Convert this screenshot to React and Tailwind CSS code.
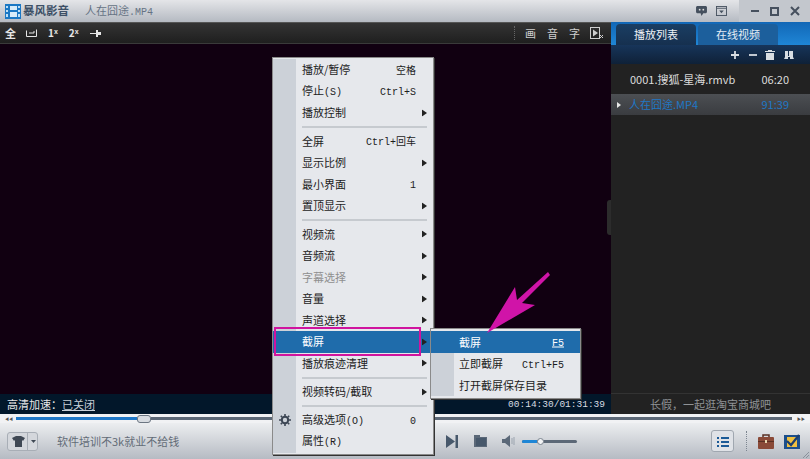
import React from "react";

const cjk = "font-['Noto_Sans_CJK_SC','Liberation_Sans',sans-serif]";
const mono = "font-['Liberation_Mono','Noto_Sans_CJK_SC',monospace]";

const Arrow = () => (
  <svg width="5" height="7" viewBox="0 0 5 7" className="absolute right-[6px] top-1/2 -translate-y-1/2">
    <path d="M0 0L5 3.5L0 7Z" fill="#222" />
  </svg>
);

const Item = ({ label, sub, shortcut, arrow, disabled, active, icon }) => (
  <div className={`relative flex h-[21.5px] items-center ${active ? "bg-[#1f6cab] text-white" : disabled ? "text-[#8f8f8f]" : "text-[#1c1c1c]"}`}>
    <div className={`flex h-full w-[23px] shrink-0 items-center justify-center ${active ? "" : "bg-[#ccd1d8]"}`}>{icon}</div>
    <span className="ml-[6px] whitespace-nowrap text-[11px] leading-none">{label}{sub && <span className={`${mono} text-[10px]`}>{sub}</span>}</span>
    {shortcut && <span className={`${mono} absolute right-[17px] translate-y-[1.5px] text-[10px] leading-none`}>{shortcut}</span>}
    {arrow && <Arrow />}
  </div>
);

const Sep = () => (
  <div className="relative flex h-[7px] items-center">
    <div className="h-full w-[23px] bg-[#ccd1d8]" />
    <div className="ml-[6px] mr-[6px] h-[2px] flex-1 bg-[#c6cacf]" />
  </div>
);

const Gear = () => (
  <svg width="12" height="12" viewBox="0 0 12 12">
    <circle cx="6" cy="6" r="3.2" fill="none" stroke="#3c4654" strokeWidth="2" />
    <path d="M6 0V2M6 10V12M0 6H2M10 6H12M1.8 1.8L3.2 3.2M8.8 8.8L10.2 10.2M1.8 10.2L3.2 8.8M8.8 3.2L10.2 1.8" stroke="#3c4654" strokeWidth="1.6" />
  </svg>
);

const ToolGlyph = ({ children, className = "" }) => (
  <span className={`text-[11px] leading-none ${className}`}>{children}</span>
);

export default function App() {
  return (
    <div className={`${cjk} relative flex h-[459px] w-[810px] flex-col overflow-hidden bg-[#c8ccd2]`}>
      {/* title bar */}
      <div className="flex h-[22px] shrink-0 items-center bg-gradient-to-b from-[#e4e5e8] to-[#b5bac2]">
        <svg width="16" height="16" viewBox="0 0 16 16" className="ml-[5px]">
          <rect x="0" y="1" width="16" height="15" fill="#1b78c4" />
          <path d="M1 3H3V5H1ZM1 7H3V9H1ZM1 11H3V14H1ZM13 3H15V5H13ZM13 7H15V9H13ZM13 11H15V14H13Z" fill="#bfe0f7" />
          <rect x="5" y="3" width="7" height="4" fill="#d8ecf9" />
          <rect x="5" y="9" width="7" height="5" fill="#d8ecf9" />
        </svg>
        <span className="ml-[2px] text-[11.5px] font-bold leading-none text-[#3d5066]">暴风影音</span>
        <span className="ml-[16px] text-[11px] leading-none text-[#667384]">人在囧途<span className={`${mono} text-[10px]`}>.MP4</span></span>
        <div className="ml-auto flex h-full items-center">
          <svg width="11" height="10" viewBox="0 0 12 11" className="mr-[9px]">
            <path d="M1 0H11L12 1V7L11 8H8L6 11L5 8H1L0 7V1Z" fill="#45505e" />
            <circle cx="4" cy="4" r="1" fill="#ddd" />
            <circle cx="8" cy="4" r="1" fill="#ddd" />
          </svg>
          <svg width="11" height="10" viewBox="0 0 12 11" className="mr-[12px]">
            <rect x="0.5" y="0.5" width="11" height="10" fill="none" stroke="#45505e" />
            <path d="M1 2.5H11" stroke="#45505e" />
            <path d="M3.5 5H8.5L6 8Z" fill="#45505e" />
          </svg>
          <div className="flex h-full w-[71px] items-center bg-[#c3c7cd] pl-[12px]">
            <div className="h-[2px] w-[8px] bg-[#46505e]" />
            <div className="ml-[11px] h-[9px] w-[9px] border-2 border-[#46505e]" />
            <svg width="10" height="10" viewBox="0 0 10 10" className="ml-[11px]"><path d="M1 1L9 9M9 1L1 9" stroke="#46505e" strokeWidth="2" /></svg>
          </div>
        </div>
      </div>

      {/* middle */}
      <div className="flex min-h-0 flex-1">
        {/* left column */}
        <div className="relative flex w-[611px] shrink-0 flex-col border-t border-[#555]">
          <div className="flex h-[21px] shrink-0 items-center border-b border-[#3a3a3a] bg-gradient-to-b from-[#343434] to-[#1f1f1f] pl-[5px] pr-[8px] text-[#e6e6e6]">
            <ToolGlyph className="font-bold">全</ToolGlyph>
            <svg width="11" height="8" viewBox="0 0 11 8" className="ml-[10px]"><path d="M0.5 1.5V7.5H10.5V0.5M3 4H8M8 2V4" fill="none" stroke="#e6e6e6" /></svg>
            <span className="ml-[11px] text-[10px] font-bold leading-none">1<sup className="text-[7px]">x</sup></span>
            <span className="ml-[11px] text-[10px] font-bold leading-none">2<sup className="text-[7px]">x</sup></span>
            <svg width="12" height="9" viewBox="0 0 12 9" className="ml-[11px]"><path d="M0 4H6V1H8V3H11V6H8V8H6V5H0Z" fill="#e6e6e6" /></svg>
            <div className="ml-auto mr-[10px] h-[14px] border-l border-dotted border-[#666]" />
            <ToolGlyph className="text-[#cfcfcf]">画</ToolGlyph>
            <ToolGlyph className="ml-[11px] text-[#cfcfcf]">音</ToolGlyph>
            <ToolGlyph className="ml-[11px] text-[#cfcfcf]">字</ToolGlyph>
            <svg width="13" height="12" viewBox="0 0 13 12" className="ml-[10px]"><rect x="0.5" y="0.5" width="9" height="11" fill="none" stroke="#cfcfcf" /><path d="M3 2.5L8 6L3 9.5Z" fill="#cfcfcf" /><path d="M10 8L13 11M13 8L10 11" stroke="#cfcfcf" /></svg>
          </div>
          <div className="flex-1 bg-[#110011]" />
          <div className="flex h-[20px] shrink-0 items-center justify-between bg-[#02172a] pl-[7px] pr-[6px]">
            <span className="text-[11px] leading-none text-[#e8e8e8]">高清加速：<span className="text-[#c8d0d8] underline">已关闭</span></span>
            <span className={`${mono} translate-y-[1px] text-[9.5px] leading-none text-[#d8dde2]`}>00:14:30/01:31:39</span>
          </div>
          <button className="absolute right-0 top-[177px] h-[35px] w-[4px] rounded-l-[3px] bg-[#2c2c2c]" aria-label="收起" />
        </div>

        {/* right panel */}
        <div className="flex min-w-0 flex-1 flex-col">
          <div className="flex h-[23px] shrink-0 items-end bg-gradient-to-b from-[#1267b6] to-[#1f86d6] pl-[5px]">
            <div className="flex h-[21px] w-[80px] items-center justify-center rounded-t-[4px] bg-gradient-to-b from-[#1a3e63] to-[#16304f] text-[11px] leading-none text-[#eef2f6]">播放列表</div>
            <div className="ml-[2px] flex h-[21px] w-[80px] items-center justify-center rounded-t-[4px] bg-[#1c5f9c] text-[11px] leading-none text-[#e4edf5]">在线视频</div>
          </div>
          <div className="flex h-[19px] shrink-0 items-center justify-end bg-gradient-to-b from-[#17355a] to-[#0f2138] pr-[16px] text-[#d8dde2]">
            <svg width="8" height="8" viewBox="0 0 9 9"><path d="M0 3.5H9V5.5H0ZM3.5 0H5.5V9H3.5Z" fill="currentColor" /></svg>
            <svg width="8" height="8" viewBox="0 0 9 9" className="ml-[10px]"><path d="M0 3.5H9V5.5H0Z" fill="currentColor" /></svg>
            <svg width="10" height="10" viewBox="0 0 10 10" className="ml-[8px]"><path d="M3 0H7V1H10V2H0V1H3ZM1 3H9V10H1Z" fill="currentColor" /></svg>
            <svg width="10" height="10" viewBox="0 0 10 10" className="ml-[9px]"><path d="M1 1H4V6H5V1H9V7L10 9H6V7H4V9H0L1 7Z" fill="currentColor" /></svg>
          </div>
          <div className="flex flex-1 flex-col bg-[#222222]">
            <div className="flex h-[30px] shrink-0 items-center justify-between pl-[19px] pr-[21px] text-[#dcdcdc]">
              <span className="text-[11px] leading-none">0001.搜狐-星海.rmvb</span>
              <span className="text-[11px] leading-none">06:20</span>
            </div>
            <div className="relative flex h-[21px] shrink-0 items-center justify-between bg-gradient-to-b from-[#4c4f53] to-[#3a3c40] pl-[18px] pr-[21px] text-[#1f78c6]">
              <svg width="4" height="6" viewBox="0 0 4 6" className="absolute left-[6px]"><path d="M0 0L4 3L0 6Z" fill="#e8e8e8" /></svg>
              <span className="text-[11px] leading-none">人在囧途.MP4</span>
              <span className="text-[11px] leading-none">91:39</span>
            </div>
          </div>
          <div className="flex h-[21px] shrink-0 items-center justify-center border-t border-[#333] bg-[#222222] text-[11px] leading-none text-[#8f9295]">长假，一起逛淘宝商城吧</div>
        </div>
      </div>

      {/* seek bar */}
      <div className="relative flex h-[9px] shrink-0 items-center gap-[3px] bg-[#f1f2f4] px-[5px]">
        <span className="text-[4px] leading-none text-[#555]">◀◀</span>
        <div className="h-[3px] w-[121px] bg-[#1f78c8]" />
        <div className="-ml-[3px] h-[8px] w-[14px] rounded-[3px] border border-[#6c7682] bg-[#d8dce1]" />
        <div className="-ml-[3px] h-[3px] flex-1 bg-[#5c6877]" />
        <span className="ml-[2px] text-[4px] leading-none text-[#555]">▶▶</span>
      </div>

      {/* bottom bar */}
      <div className="relative flex h-[36px] shrink-0 items-center bg-gradient-to-b from-[#eceef0] to-[#b6bbc3] pl-[7px] pr-[10px]">
        <div className="flex h-[19px] w-[31px] items-center rounded-[3px] border border-[#a8aeb6] bg-[#d4d7dc]">
          <svg width="13" height="11" viewBox="0 0 13 11" className="ml-[4px]"><path d="M4 0H9L13 2L11 5L10 4V11H3V4L2 5L0 2Z" fill="#3f4854" /></svg>
          <div className="ml-[2px] h-full border-l border-[#a8aeb6]" />
          <svg width="5" height="3" viewBox="0 0 5 3" className="ml-[3px]"><path d="M0 0H5L2.5 3Z" fill="#3f4854" /></svg>
        </div>
        <span className="ml-[19px] text-[11px] leading-none text-[#636c77]">软件培训不3k就业不给钱</span>
        <div className="ml-[267px] flex items-center">
          <svg width="12" height="13" viewBox="0 0 12 13"><path d="M0 0L9 6.5L0 13Z" fill="#47586b" /><rect x="9.5" y="0" width="2.5" height="13" fill="#47586b" /></svg>
          <svg width="13" height="12" viewBox="0 0 13 12" className="ml-[16px]"><path d="M0 0H6V2H13V12H0Z" fill="#5b6878" /><rect x="2" y="3" width="10" height="8" fill="#47586b" /></svg>
          <svg width="13" height="12" viewBox="0 0 13 12" className="ml-[15px]"><path d="M0 4H3L8 0V12L3 8H0Z" fill="#5b6878" /><path d="M10 3V9M12 2V10" stroke="#9aa3ae" /></svg>
          <div className="relative ml-[7px] flex h-[3px] w-[55px] items-center rounded-full bg-[#5c6877]">
            <div className="h-full w-[15px] rounded-l-full bg-[#1f86d6]" />
            <div className="h-[7px] w-[7px] rounded-full border border-[#7a838e] bg-[#f2f3f5]" />
          </div>
        </div>
        <div className="ml-auto flex items-center">
          <div className="flex h-[22px] w-[23px] items-center justify-center rounded-[3px] border border-[#a0a7b0] bg-[#dfe2e7]">
            <svg width="12" height="11" viewBox="0 0 12 11"><path d="M0 1H2V3H0ZM0 5H2V7H0ZM0 9H2V11H0ZM4 1H12V3H4ZM4 5H12V7H4ZM4 9H12V11H4Z" fill="#1b5a97" /></svg>
          </div>
          <div className="ml-[12px] h-[20px] border-l border-dotted border-[#7c8590]" />
          <svg width="16" height="15" viewBox="0 0 16 15" className="ml-[11px]"><rect x="0" y="3" width="16" height="12" rx="1" fill="#8a4a38" /><path d="M5 3V1H11V3" fill="none" stroke="#5a3024" strokeWidth="1.5" /><rect x="0" y="7" width="16" height="1" fill="#5a3024" /><rect x="7" y="6" width="2" height="3" fill="#e8d8b0" /></svg>
          <svg width="16" height="15" viewBox="0 0 16 15" className="ml-[10px]"><rect x="0" y="1" width="16" height="14" fill="#1c4f8c" /><rect x="3" y="3" width="10" height="10" fill="#f0c040" /><path d="M3 7L7 11L15 1" fill="none" stroke="#1c3f70" strokeWidth="2.2" /></svg>
        </div>
        <svg width="6" height="6" viewBox="0 0 6 6" className="absolute bottom-[1px] right-[1px]"><path d="M0 6L6 0M3 6L6 3" stroke="#8a919b" /></svg>
      </div>

      {/* context menu */}
      <div className="absolute left-[272px] top-[57px] w-[162px] border border-[#8a8a8a] bg-[#e6e8ec] py-[1px] shadow-[1px_1px_0_#333]">
        <Item label="播放/暂停" shortcut="空格" />
        <Item label="停止" sub="(S)" shortcut="Ctrl+S" />
        <Item label="播放控制" arrow />
        <Sep />
        <Item label="全屏" shortcut="Ctrl+回车" />
        <Item label="显示比例" arrow />
        <Item label="最小界面" shortcut="1" />
        <Item label="置顶显示" arrow />
        <Sep />
        <Item label="视频流" arrow />
        <Item label="音频流" arrow />
        <Item label="字幕选择" arrow disabled />
        <Item label="音量" arrow />
        <Item label="声道选择" arrow />
        <Item label="截屏" arrow active />
        <Item label="播放痕迹清理" arrow />
        <Sep />
        <Item label="视频转码/截取" arrow />
        <Sep />
        <Item label="高级选项" sub="(O)" shortcut="0" icon={<Gear />} />
        <Item label="属性" sub="(R)" />
      </div>

      {/* sub menu */}
      <div className="absolute left-[430px] top-[328px] w-[151px] border border-[#8a8a8a] bg-[#e6e8ec] py-[2px] shadow-[1px_1px_0_#333]">
        <div className="relative flex h-[22px] items-center bg-[#1f6cab] pl-[28px] text-white">
          <span className="text-[11px] leading-none">截屏</span>
          <span className={`${mono} absolute right-[16px] translate-y-[1.5px] text-[10px] leading-none underline`}>F5</span>
        </div>
        <div className="relative flex h-[21.5px] items-center text-[#1c1c1c]">
          <div className="h-full w-[23px] bg-[#ccd1d8]" />
          <span className="ml-[5px] text-[11px] leading-none">立即截屏</span>
          <span className={`${mono} absolute right-[16px] translate-y-[1.5px] text-[10px] leading-none`}>Ctrl+F5</span>
        </div>
        <div className="relative flex h-[21.5px] items-center text-[#1c1c1c]">
          <div className="h-full w-[23px] bg-[#ccd1d8]" />
          <span className="ml-[5px] text-[11px] leading-none">打开截屏保存目录</span>
        </div>
      </div>

      {/* pink highlight */}
      <div className="pointer-events-none absolute left-[274px] top-[327px] h-[29px] w-[147px] border-2 border-[#d0149f]" />

      {/* pink arrow */}
      <svg width="70" height="70" viewBox="0 0 70 70" className="pointer-events-none absolute left-[485px] top-[268px]">
        <path d="M2 65L30 19L32 32L63 4L65 7L37 35L50 37Z" fill="#d014a8" />
      </svg>
    </div>
  );
}
